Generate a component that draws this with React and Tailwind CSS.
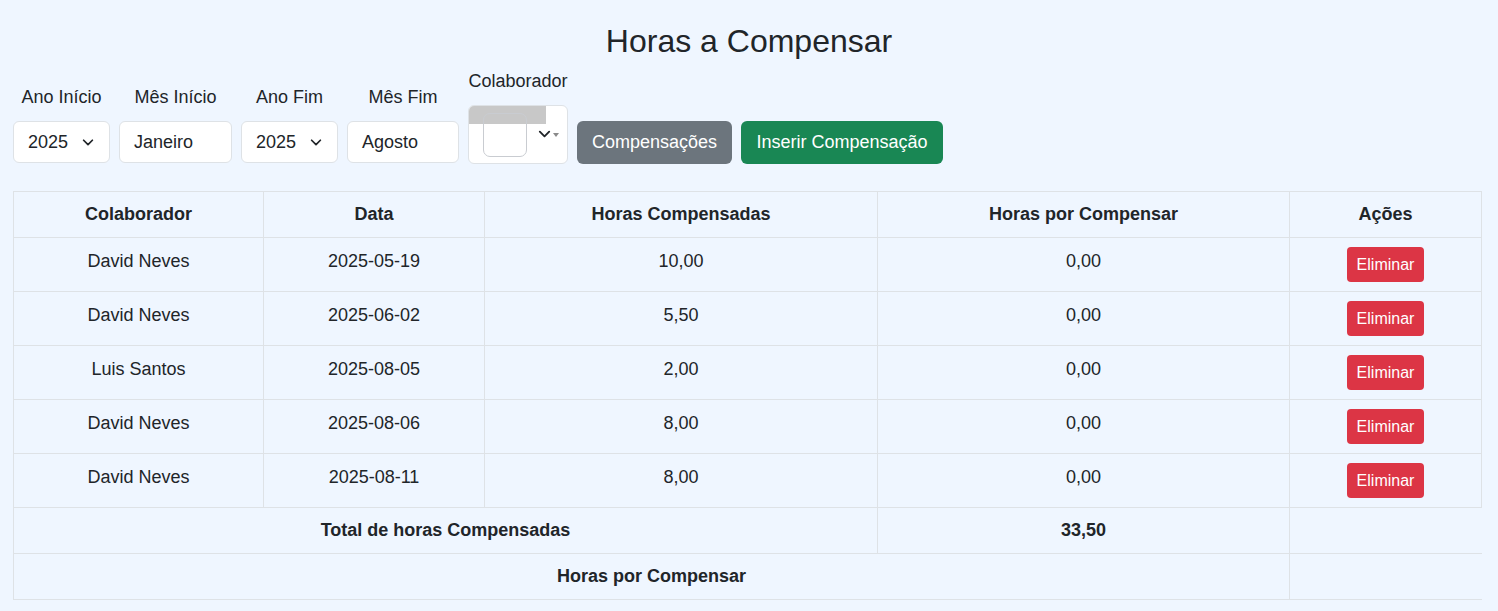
import React from 'react';

const rows = [
  { nome: 'David Neves', data: '2025-05-19', comp: '10,00', por: '0,00' },
  { nome: 'David Neves', data: '2025-06-02', comp: '5,50', por: '0,00' },
  { nome: 'Luis Santos', data: '2025-08-05', comp: '2,00', por: '0,00' },
  { nome: 'David Neves', data: '2025-08-06', comp: '8,00', por: '0,00' },
  { nome: 'David Neves', data: '2025-08-11', comp: '8,00', por: '0,00' },
];

const Chevron = ({ className }) => (
  <svg className={className} viewBox="0 0 16 16" fill="none" stroke="currentColor" strokeWidth="2" strokeLinecap="round" strokeLinejoin="round">
    <path d="M3 6l5 5 5-5" />
  </svg>
);

const Field = ({ label, width, children }) => (
  <div className="flex flex-col items-center">
    <label className="mb-[10px] leading-[27px]">{label}</label>
    <div className={`${width} h-[42px] mb-[1px] bg-white border border-[#dee2e6] rounded-[6px] flex items-center pl-[14px] pr-[14px] justify-between`}>
      {children}
    </div>
  </div>
);

const App = () => {
  return (
    <div className="min-h-screen bg-[#eff6ff] text-[#212529] text-[18px] font-['Liberation_Sans',Arial,sans-serif] pl-[13px] pr-[17px]">
      <h1 className="text-center text-[32px] leading-[38px] pt-[22px] pb-[8px] -mr-[4px]">Horas a Compensar</h1>

      {/* Filtros */}
      <div className="flex items-end gap-[9px]">
        <Field label="Ano Início" width="w-[97px]">
          <span>2025</span>
          <Chevron className="w-[14px] h-[14px] text-[#212529]" />
        </Field>
        <Field label="Mês Início" width="w-[113px]">
          <span>Janeiro</span>
        </Field>
        <Field label="Ano Fim" width="w-[97px]">
          <span>2025</span>
          <Chevron className="w-[14px] h-[14px] text-[#212529]" />
        </Field>
        <Field label="Mês Fim" width="w-[112px]">
          <span>Agosto</span>
        </Field>
        <div className="flex flex-col items-center">
          <label className="mb-[10px] leading-[27px]">Colaborador</label>
          <div className="relative w-[100px] h-[59px] bg-white border border-[#dee2e6] rounded-[6px] overflow-hidden">
            <div className="absolute left-0 top-0 w-[77px] h-[18px] bg-[#c8c8c8]" />
            <div className="absolute left-[14px] top-[7px] w-[44px] h-[44px] rounded-[7px] border border-[#c9ccd1] bg-transparent" />
            <Chevron className="absolute left-[68px] top-[20px] w-[15px] h-[15px] text-[#212529]" />
            <div className="absolute left-[84px] top-[27px] w-0 h-0 border-l-[3px] border-r-[3px] border-t-[4px] border-l-transparent border-r-transparent border-t-[#8a8a8a]" />
          </div>
        </div>
        <button className="h-[43px] w-[155px] rounded-[6px] bg-[#6c757d] text-white">Compensações</button>
        <button className="h-[43px] w-[202px] rounded-[6px] bg-[#198754] text-white">Inserir Compensação</button>
      </div>

      {/* Tabela */}
      <table className="mt-[27px] w-full table-fixed border-collapse text-center">
        <colgroup>
          <col className="w-[250px]" />
          <col className="w-[221px]" />
          <col className="w-[393px]" />
          <col className="w-[412px]" />
          <col className="w-[192px]" />
        </colgroup>
        <thead>
          <tr className="font-bold">
            <th className="border border-[#dee2e6] h-[46px] leading-[27px]">Colaborador</th>
            <th className="border border-[#dee2e6] leading-[27px]">Data</th>
            <th className="border border-[#dee2e6] leading-[27px]">Horas Compensadas</th>
            <th className="border border-[#dee2e6] leading-[27px]">Horas por Compensar</th>
            <th className="border border-[#dee2e6] leading-[27px]">Ações</th>
          </tr>
        </thead>
        <tbody>
          {rows.map((r, i) => (
            <tr key={i} className="h-[54px]">
              <td className="border border-[#dee2e6] align-top pt-[10px] leading-[27px]">{r.nome}</td>
              <td className="border border-[#dee2e6] align-top pt-[10px] leading-[27px]">{r.data}</td>
              <td className="border border-[#dee2e6] align-top pt-[10px] leading-[27px]">{r.comp}</td>
              <td className="border border-[#dee2e6] align-top pt-[10px] leading-[27px]">{r.por}</td>
              <td className="border border-[#dee2e6] align-top pt-[9px] pb-[8px]">
                <button className="h-[35px] px-[10px] rounded-[4px] bg-[#dc3545] text-white text-[16px]">Eliminar</button>
              </td>
            </tr>
          ))}
          <tr className="h-[46px] font-bold">
            <td colSpan={3} className="border border-[#dee2e6] leading-[27px]">Total de horas Compensadas</td>
            <td className="border border-[#dee2e6] leading-[27px]">33,50</td>
            <td className="border-y border-l border-r-0 border-[#dee2e6]"></td>
          </tr>
          <tr className="h-[46px] font-bold">
            <td colSpan={4} className="border border-[#dee2e6] leading-[27px]">Horas por Compensar</td>
            <td className="border-y border-l border-r-0 border-[#dee2e6]"></td>
          </tr>
        </tbody>
      </table>
    </div>
  );
};

export default App;
